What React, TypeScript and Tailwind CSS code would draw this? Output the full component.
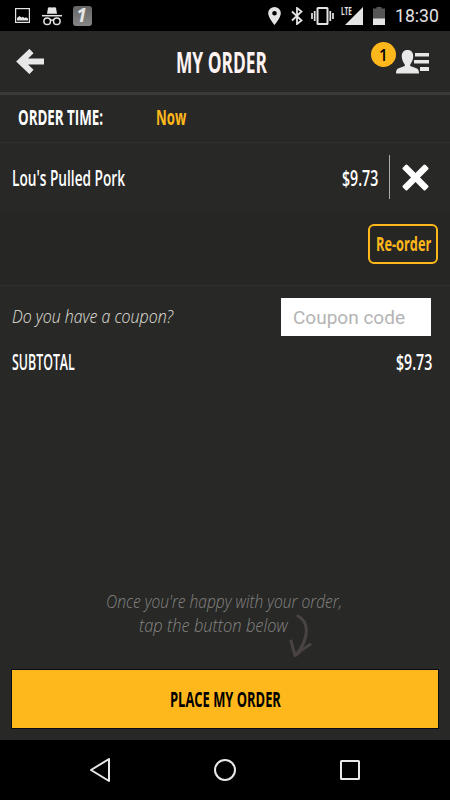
import { useLayoutEffect, useRef, useState } from "react"
import type { ReactNode } from "react"
import { clsx } from "clsx"

// Squeezes a line of text horizontally so that it fills the width of its box
function FitText({ children, className }: { children: ReactNode; className?: string }) {
  const box = useRef<HTMLSpanElement>(null)
  const text = useRef<HTMLSpanElement>(null)
  const [scale, setScale] = useState(1)

  useLayoutEffect(() => {
    if (box.current && text.current) setScale(box.current.clientWidth / text.current.offsetWidth)
  }, [])

  return (
    <span ref={box} className={clsx("block shrink-0 whitespace-nowrap", className)}>
      <span ref={text} className="inline-block origin-left" style={{ transform: `scaleX(${scale})` }}>
        {children}
      </span>
    </span>
  )
}

const condensed = "font-['Open_Sans'] font-bold"
const condensedLight = "font-['Open_Sans'] font-semibold"
const script = "font-['Open_Sans'] font-light italic"

function StatusBar() {
  return (
    <div className="flex h-[31px] shrink-0 items-center bg-black pl-[15px] pr-[11px] text-[#e4e4e4]">
      <svg className="h-[15px] w-[15px]" viewBox="0 0 15 15" fill="none">
        <rect x="0.6" y="0.6" width="13.8" height="13.8" stroke="currentColor" strokeWidth="1.2" />
        <path d="M2 12.500V10l2.500-2 2 1.500 1.500-.8 1.500 1.300 1.500-.8 2 1.300v2z" fill="currentColor" />
      </svg>
      <svg className="ml-3 h-5 w-5" viewBox="0 0 20 20" fill="none">
        <path d="M5 7.800 6 1.700Q6.500.8 10 1.500q3.500-.7 4 .2L15 7.800z" fill="currentColor" />
        <path d="M0 9.700h20" stroke="currentColor" strokeWidth="1.500" />
        <circle cx="5.200" cy="15.200" r="3.300" stroke="currentColor" strokeWidth="1.500" />
        <circle cx="14.800" cy="15.200" r="3.300" stroke="currentColor" strokeWidth="1.500" />
        <path d="M8.500 14.500q1.500-1 3 0" stroke="currentColor" strokeWidth="1.300" />
      </svg>
      <span className="ml-[11px] flex h-5 w-[19px] items-center justify-center rounded-[3px] bg-linear-to-b from-[#666] to-[#858585] pr-0.5 font-['Open_Sans'] text-[19px] leading-none font-bold italic">1</span>

      <svg className="ml-auto h-[18px] w-[13px]" viewBox="0 0 13 18">
        <path fillRule="evenodd" d="M6.500 0A6.300 6.300 0 0 0 .2 6.300C.2 11 6.500 18 6.500 18s6.300-7 6.300-11.700A6.300 6.300 0 0 0 6.500 0m0 4a2.300 2.300 0 1 1 0 4.600 2.300 2.300 0 0 1 0-4.600" fill="currentColor" />
      </svg>
      <svg className="ml-[10px] h-[18px] w-3" viewBox="0 0 12 18" fill="none" stroke="currentColor" strokeWidth="1.800">
        <path d="m1 4.500 9.500 9L6 17V1l4.500 3.500-9.500 9" />
      </svg>
      <svg className="ml-[8px] h-[18px] w-[23px]" viewBox="0 0 23 18" fill="none" stroke="currentColor">
        <rect x="6.500" y="1" width="10" height="16" rx="0.500" strokeWidth="2" />
        <path d="M1 6v6M3.700 4v10M19.300 4v10M22 6v6" strokeWidth="1.700" />
      </svg>
      <div className="relative ml-[7px] h-[18px] w-[22px]">
        <FitText className="absolute -top-px left-0 w-[11px] font-['Open_Sans'] text-[11px] leading-[10px] font-bold">LTE</FitText>
        <svg className="size-full" viewBox="0 0 22 18">
          <path d="M22 0v18H4z" fill="currentColor" />
        </svg>
      </div>
      <svg className="ml-[10px] h-[18px] w-3" viewBox="0 0 12 18">
        <path d="M3.500 0h5v1.500H12V18H0V1.500h3.500z" fill="#555" />
        <path d="M0 11.500h12V18H0z" fill="currentColor" />
      </svg>
      <FitText className="ml-[10px] w-[44px] pt-px font-[Roboto] text-[18px] leading-[18px]">18:30</FitText>
    </div>
  )
}

function Header() {
  return (
    <header className="flex h-[64px] shrink-0 items-center border-b-[3px] border-[#3a3a39] pl-4 pr-[21px]">
      <svg className="h-[25px] w-7" viewBox="0 0 28 25" fill="none">
        <path d="M28 12.500H7M15.500 2 4.500 12.500l11 10.500" stroke="#e8e8e8" strokeWidth="6" />
      </svg>
      <FitText className={`ml-[132px] w-[91px] text-[29px] leading-[34px] text-[#fff3f3] ${condensed}`}>MY ORDER</FitText>
      <div className="relative ml-auto">
        <span className="absolute -top-2 -left-[25px] flex size-[25px] items-center justify-center rounded-full bg-[#ffb81c] text-black">
          <FitText className="w-[9px] font-['Open_Sans'] text-[17px] leading-none font-semibold">1</FitText>
        </span>
        <svg className="h-6 w-[33px]" viewBox="0 0 33 24" fill="#e8e8e8">
          <path d="M11.500 0C7.500 0 5.500 2.700 5.800 7c.2 3.500 1.700 5.500 3 7.500v1.500L2 18.500Q0 19.500 0 23.500h23q0-4-2-5L14.200 16v-1.500c1.300-2 2.800-4 3-7.500.3-4.300-1.700-7-5.700-7" />
          <path d="M19 3h14v3.500H19zM18 10h15v3.500H18zM24 17h9v4h-9z" />
        </svg>
      </div>
    </header>
  )
}

function NavBar() {
  return (
    <nav className="flex h-[60px] shrink-0 items-center justify-between bg-black px-[88px] text-[#e8e8e8]">
      <svg className="h-6 w-6" viewBox="0 0 24 24" fill="none" stroke="currentColor" strokeWidth="2" strokeLinejoin="round">
        <path d="M21 1v22L3 12z" />
      </svg>
      <svg className="size-6" viewBox="0 0 24 24" fill="none" stroke="currentColor" strokeWidth="2">
        <circle cx="12" cy="12" r="10" />
      </svg>
      <svg className="size-6" viewBox="0 0 24 24" fill="none" stroke="currentColor" strokeWidth="2">
        <rect x="3" y="3" width="18" height="18" rx="0.5" />
      </svg>
    </nav>
  )
}

export default function App() {
  return (
    <div className="flex h-[800px] w-[450px] flex-col overflow-hidden bg-[#282826] text-white">
      <StatusBar />
      <Header />

      <section className="flex h-12 shrink-0 items-center border-b border-[#30302f] pb-[5px] pl-[18px]">
        <FitText className={`w-[85px] text-[22px] leading-6 ${condensed}`}>ORDER TIME:</FitText>
        <FitText className={`ml-[53px] w-[30px] text-[22px] leading-6 text-[#ffb81c] ${condensed}`}>Now</FitText>
      </section>

      <section className="flex h-[68px] shrink-0 items-center pl-3 pr-[21px]">
        <FitText className={`w-[113px] text-[22px] leading-6 ${condensedLight}`}>Lou's Pulled Pork</FitText>
        <FitText className={`ml-auto w-9 text-[22px] leading-6 ${condensedLight}`}>$9.73</FitText>
        <span className="ml-[11px] h-11 w-px bg-[#aaa]" />
        <svg className="ml-[12px] h-7 w-[27px]" viewBox="0 0 27 28" fill="#fff">
          <g transform="rotate(45 13.500 14.500)">
            <rect x="-2.500" y="11.300" width="32" height="6.400" rx="1.500" />
            <rect x="10.300" y="-1.500" width="6.400" height="32" rx="1.500" />
          </g>
        </svg>
      </section>

      <section className="flex h-[75px] shrink-0 justify-end border-b border-[#30302f] bg-[#262624] pt-[13px] pr-3">
        <button className="flex h-10 w-[70px] items-center justify-center rounded-md border-2 border-[#ffb81c] text-[#ffb81c]">
          <FitText className={`w-[55px] text-[20px] leading-6 ${condensed}`}>Re-order</FitText>
        </button>
      </section>

      <section className="flex shrink-0 items-center justify-between pt-[12px] pr-[19px] pl-3">
        <FitText className={`w-[161px] pb-[3px] text-[18px] leading-6 text-[#e0e0de] ${script}`}>Do you have a coupon?</FitText>
        <input
          placeholder="Coupon code"
          className="h-[38px] w-[150px] bg-white px-3 font-[Roboto] text-[19px] placeholder:text-[#b4b4b4]"
        />
      </section>
      <section className="flex h-[52px] shrink-0 items-center justify-between pr-[18px] pb-0.5 pl-3">
        <FitText className={`w-[63px] text-[22px] leading-6 ${condensedLight}`}>SUBTOTAL</FitText>
        <FitText className={`w-9 text-[22px] leading-6 ${condensedLight}`}>$9.73</FitText>
      </section>

      <div className={`relative mt-auto shrink-0 pb-[33px] text-[18px] leading-6 text-[#858583] ${script}`}>
        <FitText className="ml-[106px] w-[236px]">Once you're happy with your order,</FitText>
        <FitText className="ml-[139px] w-[149px]">tap the button below</FitText>
        <svg className="absolute top-[25px] left-[288px] h-[44px] w-6" viewBox="0 0 24 44" fill="none" stroke="#4a4344" strokeWidth="3" strokeLinecap="round" strokeLinejoin="round">
          <path d="M10 2c10 5 13 20-2 39M3 27l4 14.500q8-7 15-11" />
        </svg>
      </div>

      <button className="mx-3 mb-3 h-[58px] w-[426px] shrink-0 bg-[#ffb81c] text-black shadow-[0_0_0_1px_#0b0b14]">
        <FitText className={`mx-auto w-[111px] pb-[3px] text-left text-[22px] leading-6 ${condensed}`}>PLACE MY ORDER</FitText>
      </button>
      <NavBar />
    </div>
  )
}
